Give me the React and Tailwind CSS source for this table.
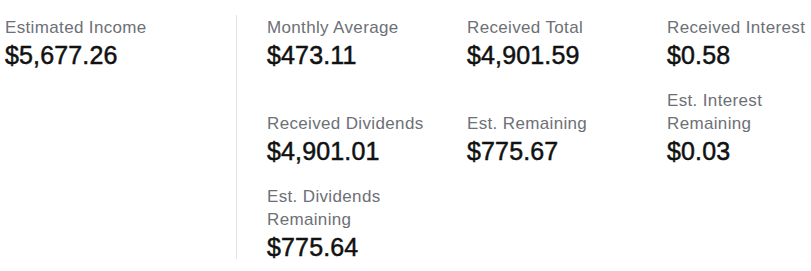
import React from "react";

const stats = [
  { label: "Monthly Average", value: "$473.11" },
  { label: "Received Total", value: "$4,901.59" },
  { label: "Received Interest", value: "$0.58" },
  { label: "Received Dividends", value: "$4,901.01" },
  { label: "Est. Remaining", value: "$775.67" },
  { label: "Est. Interest Remaining", value: "$0.03" },
  { label: "Est. Dividends Remaining", value: "$775.64" },
];

const Stat = ({ label, value }) => (
  <div className="flex flex-col justify-end">
    <div className="text-[17px] leading-[23px] tracking-[0.35px] text-[#6d7076]">
      {label}
    </div>
    <div className="text-[25px] leading-[32px] tracking-[0.15px] font-normal text-[#111111] [-webkit-text-stroke:0.5px_#111111]">
      {value}
    </div>
  </div>
);

const App = () => {
  return (
    <div
      className="w-[811px] h-[271px] overflow-hidden bg-white"
      style={{ fontFamily: '"Liberation Sans", Arial, sans-serif' }}
    >
      <div className="flex items-stretch pt-[15px]">
        {/* Total */}
        <div className="w-[236px] shrink-0 pl-[5px] pt-px">
          <Stat label="Estimated Income" value="$5,677.26" />
        </div>

        <div className="w-px shrink-0 bg-[#e2e2e2] mb-1" />

        {/* Breakdown */}
        <div className="shrink-0 pl-[30px] pt-px grid grid-cols-[165px_165px_165px] gap-x-[35px] gap-y-[18px]">
          {stats.map((s) => (
            <Stat key={s.label} label={s.label} value={s.value} />
          ))}
        </div>
      </div>
    </div>
  );
};

export default App;
